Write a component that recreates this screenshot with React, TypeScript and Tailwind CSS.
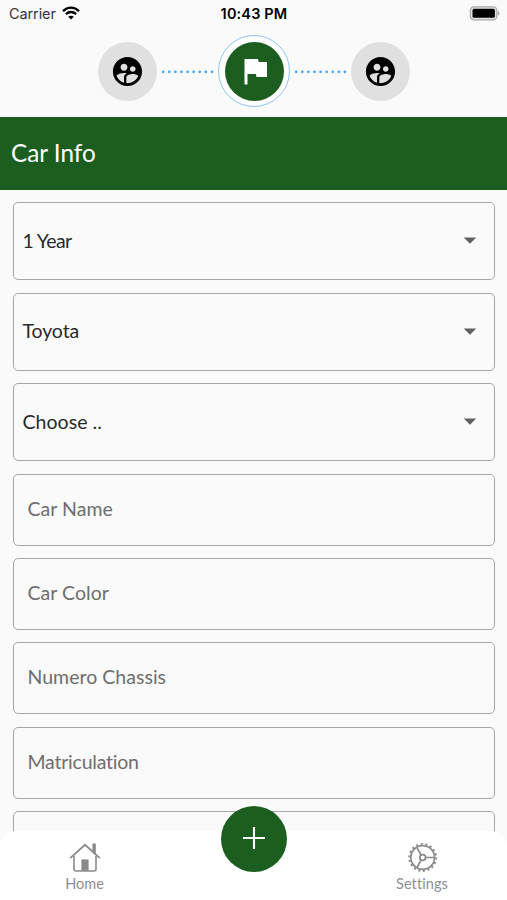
import { MdSupervisedUserCircle, MdFlag, MdArrowDropDown } from "react-icons/md";

const selects = [
  { label: "1 Year", spacing: "tracking-[-0.6px]" },
  { label: "Toyota", spacing: "tracking-[-0.1px]" },
  { label: "Choose ..", spacing: "tracking-[0.05px]" },
];

const inputs = [
  { label: "Car Name", spacing: "tracking-[0.05px]" },
  { label: "Car Color", spacing: "tracking-[0.05px]" },
  { label: "Numero Chassis", spacing: "tracking-[0.02px]" },
  { label: "Matriculation", spacing: "tracking-[-0.22px]" },
  { label: "", spacing: "" },
];

const StatusBar = () => (
  <div className="grid grid-cols-3 items-center h-[28px] pl-[9px] pr-[7px] font-['Inter',sans-serif] text-black">
    <div className="flex items-center gap-[6px]">
      <span className="text-[14.5px] tracking-[-0.1px] text-[#333]">Carrier</span>
      <svg className="mt-[-2px]" width="18" height="14" viewBox="0 0 18 14" fill="none" stroke="#000" strokeWidth="2.3">
        <path d="M1 5.1C5.6 0.5 12.4 0.5 17 5.1" />
        <path d="M3.9 8.1C6.8 5.3 11.2 5.3 14.1 8.1" />
        <path d="M9 13.6L6.2 10.8C7.8 9.3 10.2 9.3 11.8 10.8Z" fill="#000" stroke="none" />
      </svg>
    </div>
    <span className="ml-[-1px] text-center text-[14.5px] font-semibold tracking-[0.15px] whitespace-nowrap">10:43 PM</span>
    <svg className="justify-self-end mt-[-2px]" width="31" height="15" viewBox="0 0 31 15">
      <rect x="1.3" y="0.8" width="26.6" height="13" rx="3.6" fill="#e4e4e4" stroke="#a8a8a8" strokeWidth="1.2" />
      <rect x="3.5" y="2.8" width="22.4" height="9" rx="1.6" fill="#000" />
      <path d="M28.8 5C31 5.7 31 8.9 28.8 9.6Z" fill="#a8a8a8" />
    </svg>
  </div>
);

const Dots = () => (
  <svg className="mt-[1px]" width="52" height="4" viewBox="0 0 52 4">
    <path
      d="M1.2 1.8H50.6"
      stroke="#42a5f5"
      strokeWidth="2.7"
      strokeLinecap="round"
      strokeDasharray="0.01 6.08"
    />
  </svg>
);

const Step = () => (
  <div className="size-[59px] rounded-full bg-[#e0e0e0] flex items-center justify-center">
    <MdSupervisedUserCircle className="size-[35px] text-black" />
  </div>
);

const Stepper = () => (
  <div className="flex h-[89px] items-center justify-center gap-[4.5px] pb-[3px] pl-[1px]">
    <Step />
    <Dots />
    <div className="size-[72px] rounded-full border border-[#8dc4f5] bg-white flex items-center justify-center">
      <div className="size-[59px] rounded-full bg-[#1b5e20] flex items-center justify-center">
        <MdFlag className="ml-[1px] size-[36px] text-white" />
      </div>
    </div>
    <Dots />
    <Step />
  </div>
);

const BottomNav = () => (
  <nav className="absolute inset-x-0 bottom-0 flex h-[69px] justify-between rounded-t-[16px] bg-white font-['Lato',sans-serif] text-[14.5px] text-[#8e8e93]">
    <div className="flex w-[169px] flex-col items-center pt-[11px]">
      <svg width="32" height="31" viewBox="0 0 32 31" fill="none" stroke="#8a8a8e" strokeWidth="1.6">
        <path d="M1.2 16.2L16 2.8L30.8 16.2" strokeWidth="1.8" />
        <path d="M5 14V27Q5 29 7 29H25Q27 29 27 27V14" />
        <path d="M24.2 2.4H26V11.8L24.2 10.2Z" fill="#8a8a8e" />
        <path d="M12.4 17.4H19.6V28.8H12.4Z" fill="#8a8a8e" stroke="none" />
      </svg>
      <span className="leading-[21px]">Home</span>
    </div>
    <button className="mt-[-25px] size-[66px] rounded-full bg-[#1b5e20] flex items-center justify-center pb-[2px]">
      <svg width="24" height="24" viewBox="0 0 24 24" stroke="#fff" strokeWidth="2.1">
        <path d="M12 1V23M1 12H23" />
      </svg>
    </button>
    <div className="flex w-[169px] flex-col items-center pt-[11px]">
      <svg width="32" height="31" viewBox="0 0 32 31" fill="none" stroke="#8a8a8e" strokeWidth="1.7">
        <circle cx="15.7" cy="15.5" r="11.9" />
        <circle cx="15.7" cy="15.5" r="13.5" strokeWidth="1.9" strokeDasharray="2 2.712" />
        <circle cx="15.7" cy="15.5" r="2.9" />
        <path d="M18.6 15.5H27.4M14.2 13L9.8 5.3M14.2 18L9.8 25.7" />
      </svg>
      <span className="mr-[1px] leading-[21px] tracking-[0.1px]">Settings</span>
    </div>
  </nav>
);

const App = () => {
  return (
    <div className="relative flex h-[900px] w-full flex-col overflow-hidden bg-[#fafafa] font-['Lato',sans-serif]">
      <StatusBar />
      <Stepper />
      <header className="flex h-[73px] shrink-0 items-center bg-[#1b5e20] pl-[11px] text-[24.3px] text-white">
        Car Info
      </header>
      <main className="flex flex-col gap-[12.35px] px-[12.5px] pt-[12.4px]">
        {selects.map(({ label, spacing }) => (
          <div
            key={label}
            className="flex h-[78.1px] shrink-0 items-center justify-between rounded-[5px] border border-[#a6a6a6] pb-[2px] pl-[9px] pr-[9px] text-[19.5px] text-[#2a2a2a]"
          >
            <span className={spacing}>{label}</span>
            <MdArrowDropDown className="size-[30px] text-[#616161]" />
          </div>
        ))}
        {inputs.map(({ label, spacing }, i) => (
          <div
            key={i}
            className="flex h-[72px] shrink-0 items-center rounded-[5px] border border-[#a6a6a6] pb-[3px] pl-[14px] text-[19.5px] text-[#6e6e6e]"
          >
            <span className={spacing}>{label}</span>
          </div>
        ))}
      </main>
      <BottomNav />
    </div>
  );
};

export default App;
